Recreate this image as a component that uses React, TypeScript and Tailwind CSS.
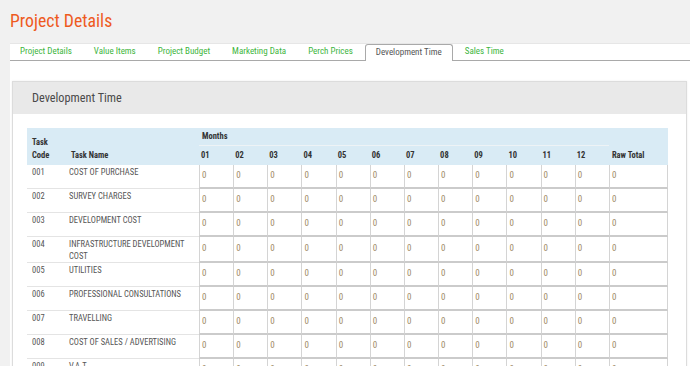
import React from "react";

const tabs = [
  "Project Details",
  "Value Items",
  "Project Budget",
  "Marketing Data",
  "Perch Prices",
  "Development Time",
  "Sales Time",
];

const months = ["01", "02", "03", "04", "05", "06", "07", "08", "09", "10", "11", "12"];

const rows: { code: string; name: React.ReactNode; h: string }[] = [
  { code: "001", name: "COST OF PURCHASE", h: "h-[24px]" },
  { code: "002", name: "SURVEY CHARGES", h: "h-[24px]" },
  { code: "003", name: "DEVELOPMENT COST", h: "h-[24px]" },
  {
    code: "004",
    name: (
      <>
        INFRASTRUCTURE DEVELOPMENT
        <br />
        COST
      </>
    ),
    h: "h-[25px]",
  },
  { code: "005", name: "UTILITIES", h: "h-[24px]" },
  { code: "006", name: "PROFESSIONAL CONSULTATIONS", h: "h-[24px]" },
  { code: "007", name: "TRAVELLING", h: "h-[24px]" },
  { code: "008", name: "COST OF SALES / ADVERTISING", h: "h-[24px]" },
  { code: "009", name: "V.A.T.", h: "h-[24px]" },
];

export default function App() {
  return (
    <div className="w-[690px] h-[366px] overflow-hidden bg-[#f1f1f1] font-['Roboto',sans-serif] [font-stretch:83%]">
      <div className="h-[43px] pl-[10px] pt-[10px]">
        <h1 className="text-[17.75px] leading-[22px] text-[#ee5a1e]">Project Details</h1>
      </div>
      <div className="ml-[10px] h-[340px] bg-white border-t border-[#e6e6e6]">
        <div className="flex h-[17px] border-b border-[#a9a9a9]">
          {tabs.map((t) => {
            const active = t === "Development Time";
            return (
              <div
                key={t}
                className={
                  active
                    ? "mb-[-1px] mr-[2px] px-[10px] h-[17px] flex items-center bg-white border border-b-0 border-[#a9a9a9] rounded-t-[3px] text-[9px] text-[#555]"
                    : "mr-[2px] px-[10px] h-[16px] flex items-center text-[9px] text-[#3db53d]"
                }
              >
                {t}
              </div>
            );
          })}
        </div>
        <div className="pt-[20px] pl-[2px] pr-[3px]">
          <div className="border border-[#dcdcdc] shadow-[0_0_2px_rgba(0,0,0,0.08)]">
            <div className="h-[32px] bg-[#e9e9e9] flex items-center pl-[19px] text-[12.25px] text-[#4a4a4a]">
              Development Time
            </div>
            <div className="pl-[14px] pt-[14px] pr-[19px] pb-[20px] bg-white">
              <table className="table-fixed w-[641px] border-separate border-spacing-0 text-[#555]">
                <colgroup>
                  <col className="w-[38px]" />
                  <col className="w-[134px]" />
                  {months.map((m) => (
                    <col key={m} className="w-[34.17px]" />
                  ))}
                  <col className="w-[59px]" />
                </colgroup>
                <thead className="bg-[#d9ebf5] text-[#333] font-bold text-[8.5px]">
                  <tr className="h-[18px]">
                    <th rowSpan={2} className="align-bottom text-left pl-[5px] pb-[3px] leading-[13px] font-bold">
                      Task
                      <br />
                      Code
                    </th>
                    <th rowSpan={2} className="align-bottom text-left pl-[6px] pb-[3px] leading-[13px] font-bold">
                      Task Name
                    </th>
                    <th colSpan={12} className="text-left pl-[3px] border-b border-[#eef3f6] font-bold">
                      Months
                    </th>
                    <th />
                  </tr>
                  <tr className="h-[19px]">
                    {months.map((m) => (
                      <th key={m} className="text-left pl-[2px] font-bold">
                        {m}
                      </th>
                    ))}
                    <th className="text-left pl-[3px] font-bold">Raw Total</th>
                  </tr>
                </thead>
                <tbody className="text-[8.5px]">
                  {rows.map((r) => (
                    <tr key={r.code} className={r.h}>
                      <td className="align-top pl-[5px] pt-[1px] leading-[12px] border-b border-[#e4e4e4]">{r.code}</td>
                      <td className="align-top pl-[4px] pt-[1px] leading-[12px] whitespace-nowrap border-b border-[#e4e4e4]">
                        {r.name}
                      </td>
                      {months.map((m) => (
                        <td
                          key={m}
                          className="align-middle pl-[2px] text-[9px] text-[#a08a66] border-l border-[#d4d4d4] border-b-2 border-b-[#cbcbcb]"
                        >
                          0
                        </td>
                      ))}
                      <td className="align-middle pl-[2px] text-[9px] text-[#a08a66] border-l border-r border-[#d4d4d4] border-b-2 border-b-[#cbcbcb]">
                        0
                      </td>
                    </tr>
                  ))}
                </tbody>
              </table>
            </div>
          </div>
        </div>
      </div>
    </div>
  );
}
